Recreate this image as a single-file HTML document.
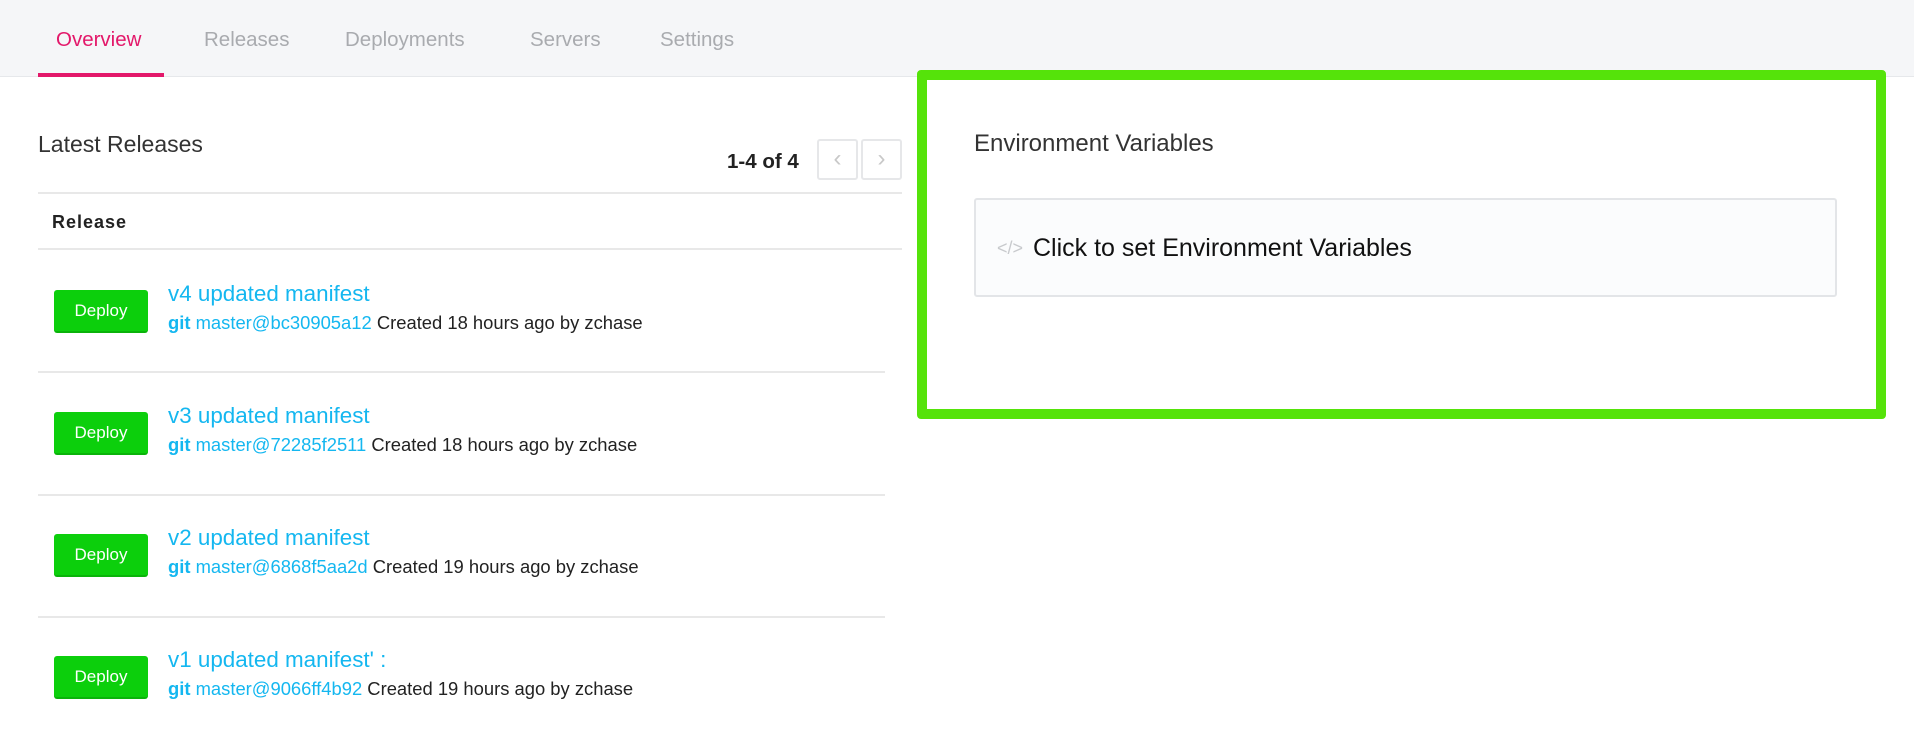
<!DOCTYPE html>
<html><head><meta charset="utf-8"><style>
*{margin:0;padding:0;box-sizing:border-box}
body{width:1914px;height:736px;background:#fff;font-family:"Liberation Sans",sans-serif;position:relative;overflow:hidden;color:#222}
.hdr{position:absolute;left:0;top:0;width:1914px;height:77px;background:#f5f6f8;border-bottom:1px solid #e6e8eb}
.tab{position:absolute;top:28px;font-size:20.5px;color:#a9abaf}
.ul{position:absolute;left:38px;top:73px;width:126px;height:4px;background:#e3186a}
.abs{position:absolute}
.hr{position:absolute;height:2px;background:#e8e8e8}
.btn{position:absolute;left:54px;width:94px;height:43px;background:#0ccf0c;color:#fff;border-radius:3px;font-size:17px;text-align:center;line-height:42px;border-bottom:2px solid #0ab30a}
.t{position:absolute;left:168px;font-size:22.4px;color:#14b7f0}
.m{position:absolute;left:168px;font-size:18.4px;color:#222}
.m b{color:#14b7f0;font-weight:bold}
.m span{color:#14b7f0}
.pg{position:absolute;top:139px;width:41px;height:41px;border:2px solid #e6e7e9;border-radius:3px;color:#c8c8c8;font-size:24px;text-align:center;line-height:36px}
</style></head><body>
<div class="hdr"></div>
<div class="tab" style="left:56px;color:#e3186a">Overview</div>
<div class="tab" style="left:204px">Releases</div>
<div class="tab" style="left:345px">Deployments</div>
<div class="tab" style="left:530px">Servers</div>
<div class="tab" style="left:660px">Settings</div>
<div class="ul"></div>

<div class="abs" style="left:38px;top:131px;font-size:23px;color:#333;font-weight:300">Latest Releases</div>
<div class="abs" style="left:727px;top:150px;font-size:20.5px;font-weight:bold;color:#222">1-4 of 4</div>
<div class="pg" style="left:817px">&#8249;</div>
<div class="pg" style="left:861px">&#8250;</div>
<div class="hr" style="left:38px;top:192px;width:864px"></div>
<div class="abs" style="left:52px;top:212px;font-size:18px;font-weight:bold;letter-spacing:1px">Release</div>
<div class="hr" style="left:38px;top:248px;width:864px"></div>

<div class="btn" style="top:290px">Deploy</div>
<div class="t" style="top:281px">v4 updated manifest</div>
<div class="m" style="top:312px"><b>git</b> <span>master@bc30905a12</span> Created 18 hours ago by zchase</div>
<div class="hr" style="left:38px;top:371px;width:847px"></div>

<div class="btn" style="top:412px">Deploy</div>
<div class="t" style="top:403px">v3 updated manifest</div>
<div class="m" style="top:434px"><b>git</b> <span>master@72285f2511</span> Created 18 hours ago by zchase</div>
<div class="hr" style="left:38px;top:494px;width:847px"></div>

<div class="btn" style="top:534px">Deploy</div>
<div class="t" style="top:525px">v2 updated manifest</div>
<div class="m" style="top:556px"><b>git</b> <span>master@6868f5aa2d</span> Created 19 hours ago by zchase</div>
<div class="hr" style="left:38px;top:616px;width:847px"></div>

<div class="btn" style="top:656px">Deploy</div>
<div class="t" style="top:647px">v1 updated manifest' :</div>
<div class="m" style="top:678px"><b>git</b> <span>master@9066ff4b92</span> Created 19 hours ago by zchase</div>

<div class="abs" style="left:917px;top:70px;width:969px;height:349px;border:10px solid #55e30a;border-radius:4px;background:#fff"></div>
<div class="abs" style="left:974px;top:130px;font-size:24px;color:#333;font-weight:300">Environment Variables</div>
<div class="abs" style="left:974px;top:198px;width:863px;height:99px;background:#fbfcfd;border:2px solid #e3e5e8;border-radius:3px"></div>
<div class="abs" style="left:997px;top:238px;font-size:18px;color:#c8cacd">&lt;/&gt;</div>
<div class="abs" style="left:1033px;top:234px;font-size:25px;color:#111">Click to set Environment Variables</div>
</body></html>
